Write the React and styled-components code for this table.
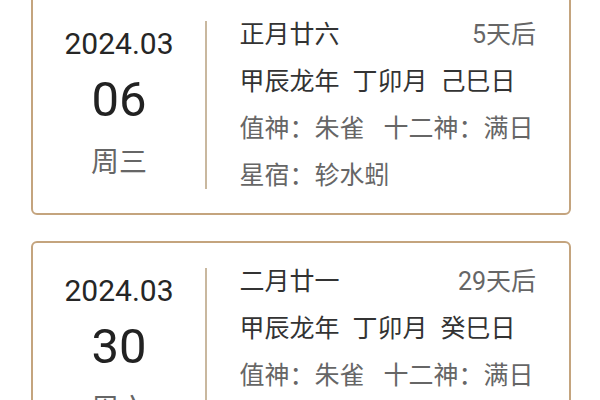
import React from "react";
import styled, { createGlobalStyle } from "styled-components";

const Global = createGlobalStyle`
  html, body { margin: 0; padding: 0; background: #ffffff; overflow: hidden; }
  body { font-family: Roboto, "Noto Sans CJK SC", sans-serif; }
`;

const List = styled.div`
  display: flex;
  flex-direction: column;
  gap: 26px;
  margin-top: -6px;
  padding-left: 31px;
  width: 540px;
`;

const Card = styled.div`
  box-sizing: border-box;
  height: 221px;
  border: 2px solid #c4a47e;
  border-radius: 6px;
  background: #ffffff;
  display: flex;
  align-items: center;
`;

const DateCol = styled.div`
  width: 172px;
  display: flex;
  flex-direction: column;
  align-items: center;
  padding-bottom: 1px;
`;

const Month = styled.div`
  font-size: 30px;
  line-height: 40px;
  color: #262626;
`;

const Day = styled.div`
  font-size: 49px;
  line-height: 72px;
  color: #222222;
`;

const Week = styled.div`
  font-size: 28px;
  line-height: 49px;
  color: #666666;
  font-family: "Noto Sans CJK SC", sans-serif;
`;

const Divider = styled.div`
  width: 1.5px;
  height: 168px;
  background: #c9b89f;
  flex-shrink: 0;
`;

const Info = styled.div`
  flex: 1;
  padding: 0 33px 0 33px;
  display: flex;
  flex-direction: column;
  font-size: 25px;
  line-height: 47px;
  font-family: Roboto, "Noto Sans CJK SC", sans-serif;
`;

const Line = styled.div`
  display: flex;
  justify-content: ${(p) => (p.$spread ? "space-between" : "flex-start")};
  gap: ${(p) => p.$gap || 0}px;
  color: ${(p) => (p.$muted ? "#666666" : "#333333")};
  white-space: nowrap;
`;

const Remain = styled.span`
  color: #666666;
`;

const cards = [
  {
    month: "2024.03",
    day: "06",
    week: "周三",
    lunar: "正月廿六",
    remain: "5天后",
    gz: ["甲辰龙年", "丁卯月", "己巳日"],
    god: ["值神：朱雀", "十二神：满日"],
    star: "星宿：轸水蚓",
  },
  {
    month: "2024.03",
    day: "30",
    week: "周六",
    lunar: "二月廿一",
    remain: "29天后",
    gz: ["甲辰龙年", "丁卯月", "癸巳日"],
    god: ["值神：朱雀", "十二神：满日"],
    star: "星宿：柳土獐",
  },
];

export default function App() {
  return (
    <>
      <Global />
      <List>
        {cards.map((c) => (
          <Card key={c.day}>
            <DateCol>
              <Month>{c.month}</Month>
              <Day>{c.day}</Day>
              <Week>{c.week}</Week>
            </DateCol>
            <Divider />
            <Info>
              <Line $spread>
                <span>{c.lunar}</span>
                <Remain>{c.remain}</Remain>
              </Line>
              <Line $gap={13}>
                {c.gz.map((g) => (
                  <span key={g}>{g}</span>
                ))}
              </Line>
              <Line $gap={19} $muted>
                {c.god.map((g) => (
                  <span key={g}>{g}</span>
                ))}
              </Line>
              <Line $muted>{c.star}</Line>
            </Info>
          </Card>
        ))}
      </List>
    </>
  );
}
